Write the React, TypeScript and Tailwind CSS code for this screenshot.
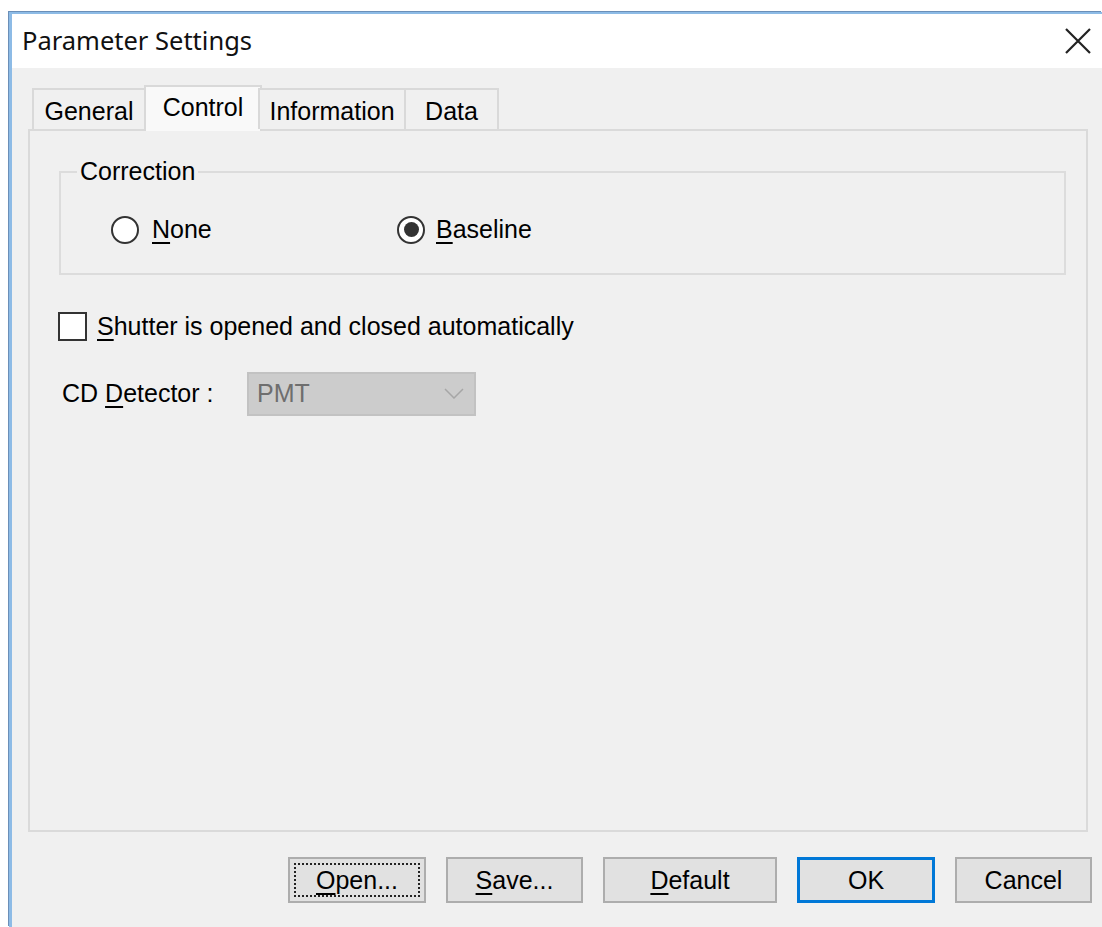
import type { ReactNode } from "react";

const ui = "font-['Liberation_Sans',Arial,sans-serif]";

type Tab = { label: string; width: string; active?: boolean };

const tabs: Tab[] = [
    { label: "General", width: "w-[114px]" },
    { label: "Control", width: "w-[118px]", active: true },
    { label: "Information", width: "w-[148px]" },
    { label: "Data", width: "w-[95px]" },
];

// first letter underlined, like a Win32 mnemonic
const Key = ({ children }: { children: ReactNode }) => (
    <u className="underline underline-offset-[4px] decoration-[2px]">{children}</u>
);

const Radio = ({ checked }: { checked?: boolean }) => (
    <span className="w-[28px] h-[28px] rounded-full border-2 border-[#333] bg-white flex items-center justify-center">
        {checked && <span className="w-[15px] h-[15px] rounded-full bg-[#333]"></span>}
    </span>
);

const Button = ({ children, width, isDefault, focused }: { children: ReactNode; width: string; isDefault?: boolean; focused?: boolean }) => (
    <button
        type="button"
        className={
            width +
            " h-[46px] bg-[#e1e1e1] text-black text-[25px] leading-none flex items-center justify-center relative " +
            (isDefault ? "border-[3px] border-[#0078d7]" : "border-2 border-[#adadad]")
        }
    >
        {focused && <span className="absolute inset-[4px] border-2 border-dotted border-[#222]"></span>}
        <span className="relative">{children}</span>
    </button>
);

export default function App() {
    return (
        <div className={"w-[1102px] h-[927px] overflow-hidden bg-white pl-[9px] pt-[12px] " + ui}>
            <div className="h-full flex flex-col border-l-[3px] border-t-[2px] border-[#8dbbe6] shadow-[-1px_-1px_0_#6b8fb8]">
                {/* title bar */}
                <div className="h-[54px] bg-white flex items-center justify-between pl-[10px] pr-[10px]">
                    <span className="font-['Noto_Sans','Open_Sans',sans-serif] text-[25.5px] text-[#111] leading-none">Parameter Settings</span>
                    <svg width="28" height="28" viewBox="0 0 28 28">
                        <path d="M2 2 L26 26 M26 2 L2 26" stroke="#222" strokeWidth="2.2" fill="none" />
                    </svg>
                </div>

                <div className="flex-1 bg-[#f0f0f0] pl-[16px] pt-[17px] flex flex-col">
                    {/* tab strip */}
                    <div className="h-[44px] flex items-end pl-[4px] relative z-10">
                        {tabs.map((tab) =>
                            tab.active ? (
                                <div
                                    key={tab.label}
                                    className={tab.width + " -mx-[2px] h-[46px] -mb-[2px] bg-[#f9f9f9] border-2 border-b-0 border-[#d9d9d9] flex justify-center pt-[5px] text-[25px] text-black leading-[30px]"}
                                >
                                    {tab.label}
                                </div>
                            ) : (
                                <div
                                    key={tab.label}
                                    className={tab.width + " h-[41px] bg-[#f0f0f0] border-2 border-b-0 border-[#d9d9d9] -ml-[2px] first:ml-0 flex justify-center pt-[6px] text-[25px] text-black leading-[30px]"}
                                >
                                    {tab.label}
                                </div>
                            )
                        )}
                    </div>

                    {/* tab page */}
                    <div className="h-[703px] mr-[14px] border-2 border-[#dadada] bg-[#f0f0f0] pl-[29px] pr-[20px] text-[25px] text-black">
                        <fieldset className="mt-[26px] h-[118px] border-2 border-[#dcdcdc] px-0">
                            <legend className="ml-[16px] px-[3px] leading-[29px]">Correction</legend>
                            <div className="flex items-center pl-[50px] pt-[25px]">
                                <label className="w-[286px] flex items-center gap-[13px]">
                                    <Radio />
                                    <span><Key>N</Key>one</span>
                                </label>
                                <label className="flex items-center gap-[11px]">
                                    <Radio checked />
                                    <span><Key>B</Key>aseline</span>
                                </label>
                            </div>
                        </fieldset>

                        <label className="mt-[33px] flex items-center gap-[10px] -ml-[1px]">
                            <span className="w-[29px] h-[29px] border-2 border-[#333] bg-white"></span>
                            <span><Key>S</Key>hutter is opened and closed automatically</span>
                        </label>

                        <div className="mt-[26px] flex items-center">
                            <span className="w-[188px] pl-[3px]">CD <Key>D</Key>etector :</span>
                            <div className="w-[229px] h-[44px] bg-[#cccccc] border-2 border-[#c2c2c2] flex items-center justify-between pl-[8px] pr-[10px]">
                                <span className="text-[#6e6e6e]">PMT</span>
                                <svg width="20" height="11" viewBox="0 0 20 11">
                                    <path d="M1 1 L10 10 L19 1" stroke="#a6a6a6" strokeWidth="1.5" fill="none" />
                                </svg>
                            </div>
                        </div>
                    </div>

                    {/* dialog buttons */}
                    <div className="mt-[25px] flex justify-end gap-[20px] pr-[10px]">
                        <Button width="w-[138px]" focused><Key>O</Key>pen...</Button>
                        <Button width="w-[137px]"><Key>S</Key>ave...</Button>
                        <Button width="w-[174px]"><Key>D</Key>efault</Button>
                        <Button width="w-[138px]" isDefault>OK</Button>
                        <Button width="w-[137px]">Cancel</Button>
                    </div>
                </div>
            </div>
        </div>
    );
}
